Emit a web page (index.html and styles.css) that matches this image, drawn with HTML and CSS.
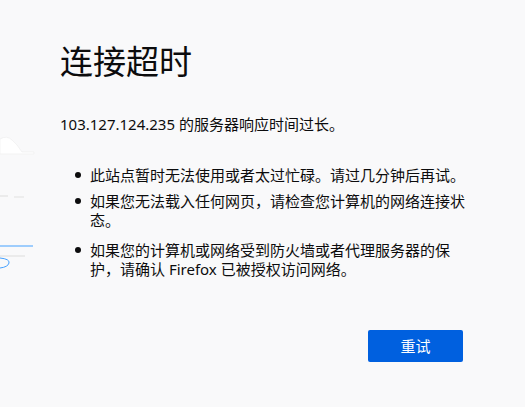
FILE: index.html
```html
<!DOCTYPE html>
<html lang="zh-CN">
  <head>
    <meta charset="UTF-8">
    <title>连接超时</title>
    <link rel="stylesheet" href="styles.css">
  </head>
  <body>
    <svg class="illustration" width="40" height="150" viewBox="0 0 40 150" xmlns="http://www.w3.org/2000/svg">
      <path d="M0 9 Q7 5 12 10 Q17 14 22 22 L34 22 L34 24 L0 24 Z" fill="#ffffff" stroke="#ececec" stroke-width="0.6"/>
      <line x1="0" y1="66" x2="8" y2="66" stroke="#e6e6e6" stroke-width="1.5"/>
      <line x1="14" y1="67" x2="24" y2="67" stroke="#e9e9e9" stroke-width="1.5"/>
      <line x1="0" y1="116" x2="33" y2="116" stroke="#45a1ff" stroke-width="1"/>
      <line x1="0" y1="126" x2="25" y2="126" stroke="#e6e6e6" stroke-width="1.5"/>
      <path d="M0 128 Q10 129 9 133 Q8 137 0 138" fill="none" stroke="#45a1ff" stroke-width="1"/>
    </svg>
    <div class="container">
      <h1 class="title">连接超时</h1>
      <p class="summary">103.127.124.235 的服务器响应时间过长。</p>
      <ul class="reasons">
        <li class="first">此站点暂时无法使用或者太过忙碌。请过几分钟后再试。</li>
        <li class="second">如果您无法载入任何网页，请检查您计算机的网络连接状态。</li>
        <li>如果您的计算机或网络受到防火墙或者代理服务器的保护，请确认 Firefox 已被授权访问网络。</li>
      </ul>
      <div class="button-container">
        <button class="retry">重试</button>
      </div>
    </div>
  </body>
</html>
```

FILE: styles.css
```css
html {
  background-color: #f9f9fa;
}
body {
  margin: 0;
  font-family: "Noto Sans", "Noto Sans CJK SC", sans-serif;
  font-size: 15px;
  color: #0c0c0d;
  background-color: #f9f9fa;
}
.illustration {
  position: absolute;
  left: 0;
  top: 130px;
}
.container {
  width: 405px;
  margin-left: 60px;
  padding-top: 42px;
}
.title {
  margin: 0;
  font-size: 33px;
  line-height: 40px;
  font-weight: normal;
}
.summary {
  margin: 33px 0 0;
  line-height: 18.4px;
}
.reasons {
  list-style: none;
  margin: 33px 0 0;
  padding: 0;
}
.reasons li {
  display: flex;
  align-items: flex-start;
  line-height: 18.7px;
}
.reasons li::before {
  content: "";
  flex: none;
  width: 6px;
  height: 6px;
  border-radius: 50%;
  background-color: #0c0c0d;
  margin: 6px 9px 0 15px;
}
.reasons .first {
  margin-bottom: 7.3px;
}
.reasons .second {
  margin-bottom: 11.3px;
}
.button-container {
  display: flex;
  justify-content: flex-end;
  margin-top: 51px;
}
.retry {
  width: 95px;
  height: 32px;
  margin-right: 2px;
  border: none;
  border-radius: 2px;
  background-color: #0060df;
  color: #ffffff;
  font-family: "Noto Sans CJK SC", sans-serif;
  font-size: 15px;
  padding: 0;
  cursor: pointer;
}
```
